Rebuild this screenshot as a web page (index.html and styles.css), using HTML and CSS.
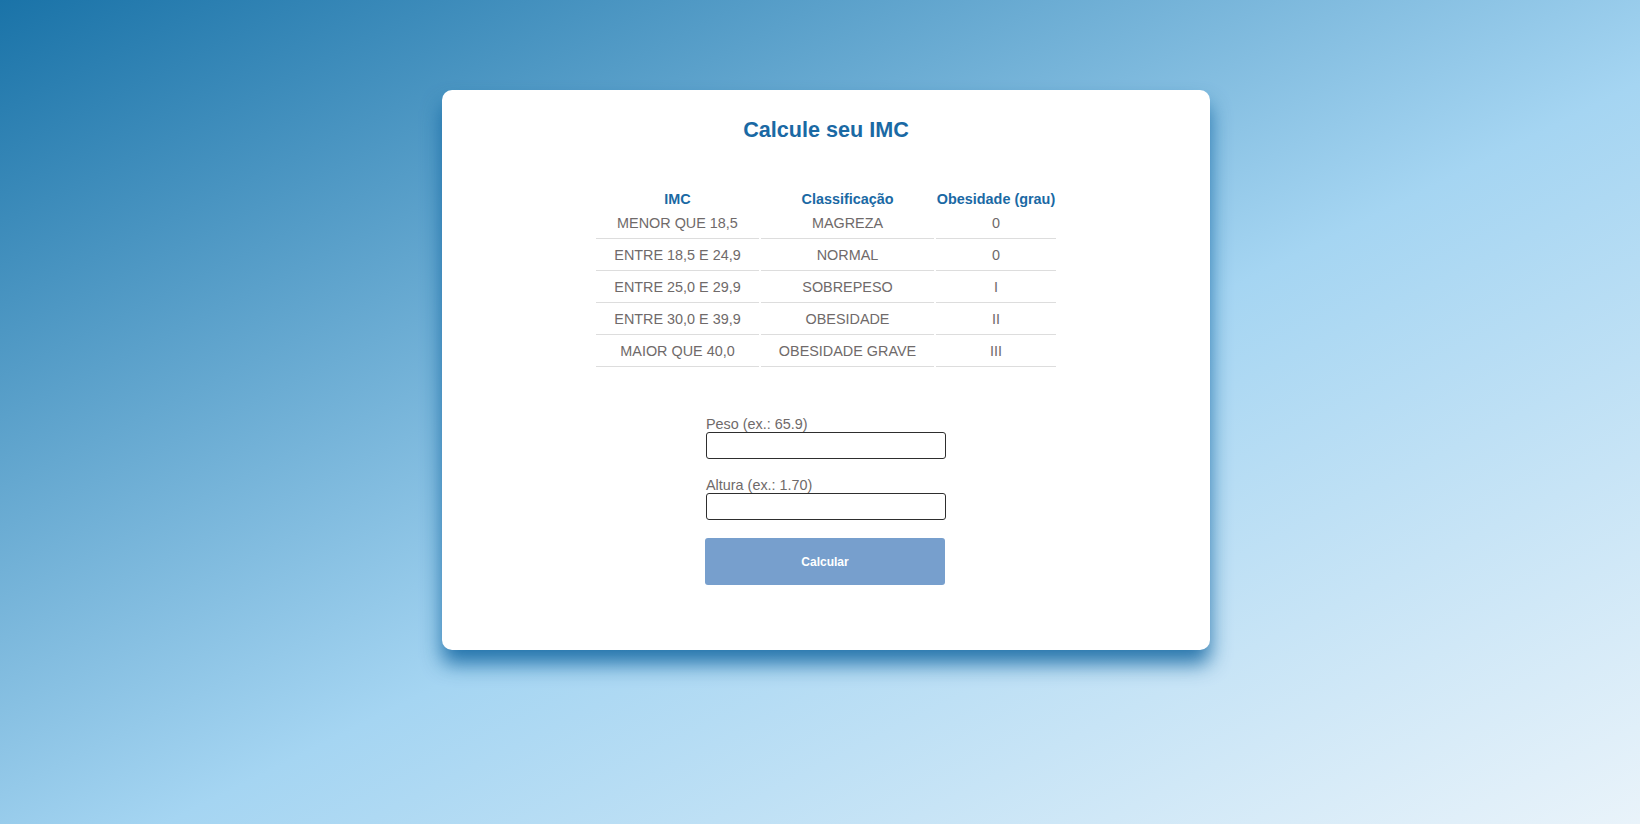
FILE: index.html
```html
<!DOCTYPE html>
<html lang="pt-BR">
<head>
<meta charset="utf-8">
<title>Calcule seu IMC</title>
<link rel="stylesheet" href="styles.css">
</head>
<body>
<main class="card">
  <h1 class="title">Calcule seu IMC</h1>
  <table class="imc-table">
    <colgroup>
      <col class="c1"><col class="c2"><col class="c3">
    </colgroup>
    <thead>
      <tr><th>IMC</th><th>Classificação</th><th>Obesidade (grau)</th></tr>
    </thead>
    <tbody>
      <tr><td>MENOR QUE 18,5</td><td>MAGREZA</td><td>0</td></tr>
      <tr><td>ENTRE 18,5 E 24,9</td><td>NORMAL</td><td>0</td></tr>
      <tr><td>ENTRE 25,0 E 29,9</td><td>SOBREPESO</td><td>I</td></tr>
      <tr><td>ENTRE 30,0 E 39,9</td><td>OBESIDADE</td><td>II</td></tr>
      <tr><td>MAIOR QUE 40,0</td><td>OBESIDADE GRAVE</td><td>III</td></tr>
    </tbody>
  </table>
  <form class="form">
    <div class="field">
      <label for="peso">Peso (ex.: 65.9)</label>
      <input id="peso" type="text">
    </div>
    <div class="field">
      <label for="altura">Altura (ex.: 1.70)</label>
      <input id="altura" type="text">
    </div>
    <button type="button" class="btn">Calcular</button>
  </form>
</main>
</body>
</html>
```
FILE: styles.css
```css
html, body {
  margin: 0;
  padding: 0;
}
body {
  min-height: 824px;
  box-sizing: border-box;
  padding: 90px 0 0 12px;
  font-family: "Liberation Sans", Arial, sans-serif;
  font-size: 14.4px;
  color: #6f6a6a;
  background: linear-gradient(to bottom right, #1a73a8 0%, #a5d5f2 55%, #e9f3fa 100%);
  background-attachment: fixed;
}
.card {
  width: 768px;
  height: 560px;
  box-sizing: border-box;
  margin: 0 auto;
  padding-top: 26px;
  background: #fff;
  border-radius: 10px;
  box-shadow: 0 14px 20px rgba(15, 100, 160, 0.85);
}
.title {
  margin: 0;
  font-size: 21.6px;
  line-height: 28px;
  font-weight: bold;
  text-align: center;
  color: #1a69a4;
}
.imc-table {
  margin: 45px auto 0;
  table-layout: fixed;
  border-collapse: separate;
  border-spacing: 2px;
  width: 464px;
}
.imc-table .c1 { width: 163px; }
.imc-table .c2 { width: 173px; }
.imc-table .c3 { width: 120px; }
.imc-table th {
  padding: 0;
  line-height: 16px;
  font-weight: bold;
  color: #1a69a4;
  text-align: center;
}
.imc-table td {
  padding: 6px 0;
  line-height: 17px;
  text-align: center;
  border-bottom: 1px solid #dddddd;
  white-space: nowrap;
}
.form {
  width: 240px;
  margin: 48px auto 0;
  display: flex;
  flex-direction: column;
}
.field {
  display: flex;
  flex-direction: column;
  margin-bottom: 19px;
}
.field label {
  line-height: 15px;
  height: 15px;
  color: #6f6a6a;
}
.field input {
  box-sizing: border-box;
  width: 240px;
  height: 27px;
  margin: 0;
  border: 1px solid #2e2e2e;
  border-radius: 3px;
  background: #fff;
  font: inherit;
}
.btn {
  width: 240px;
  height: 47px;
  margin: -1px 0 0 -1px;
  border: none;
  border-radius: 3px;
  background: #779fcd;
  color: #fff;
  font-family: "Liberation Sans", Arial, sans-serif;
  font-size: 12px;
  font-weight: bold;
}
```
